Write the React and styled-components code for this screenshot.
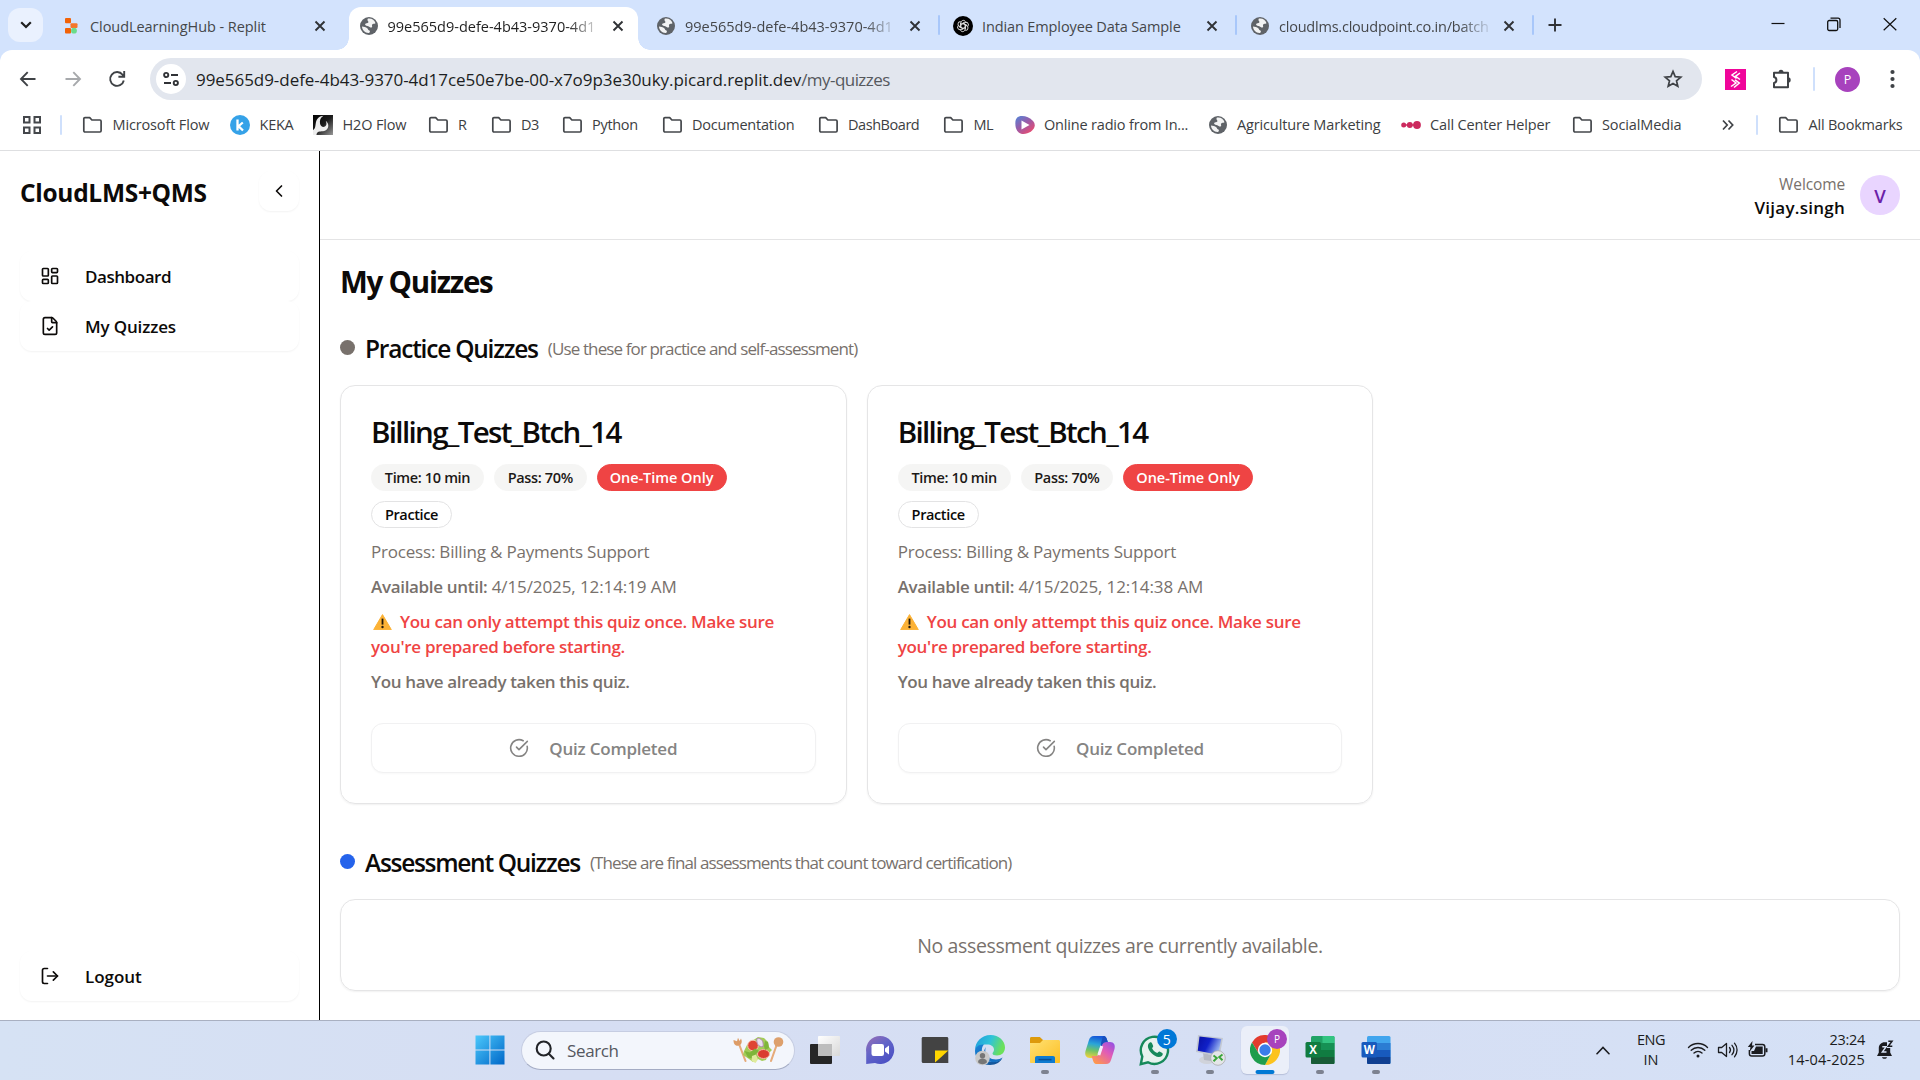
import React from "react";
import styled, { createGlobalStyle, css } from "styled-components";
import { LayoutDashboard, FileCheck, LogOut, ChevronLeft, CircleCheckBig } from "lucide-react";

const Global = createGlobalStyle`
  * { box-sizing: border-box; }
  body {
    margin: 0;
    background: #fff;
    color: #0c0a09;
    font-family: "Open Sans", "Noto Sans", sans-serif;
    overflow: hidden;
  }
  h1, h2, h3, p { margin: 0; }
  svg { display: block; flex: none; }
`;

const Screen = styled.div`
  width: 1920px;
  height: 1080px;
  display: flex;
  flex-direction: column;
`;

const Text = styled.span`
  white-space: nowrap;
  letter-spacing: ${(p) => p.$ls || 0}px;
`;

/* ---------- Browser chrome ---------- */

const TabStrip = styled.header`
  height: 50px;
  flex: none;
  display: flex;
  align-items: flex-start;
  padding-left: 8px;
  background: #d3e3fd;
`;

const TabSearch = styled.button`
  width: 35px;
  height: 34px;
  margin: 8px 8px 0 0;
  padding: 0;
  border: 0;
  border-radius: 12px;
  background: #eaf1fe;
  display: grid;
  place-items: center;
`;

const TabBox = styled.div`
  position: relative;
  width: 289px;
  height: 43px;
  margin: 7px ${(p) => (p.$divider ? 3 : 8.5)}px 0 0;
  padding: 0 8px 5px 10px;
  display: flex;
  align-items: center;
  gap: 9px;
  font-size: 14.5px;
  color: #45474a;
  border-radius: 12px 12px 0 0;
  ${(p) =>
    p.$active &&
    css`
      background: #fff;
      color: #1f1f1f;
      &::before,
      &::after {
        content: "";
        position: absolute;
        bottom: 0;
        width: 12px;
        height: 12px;
      }
      &::before {
        left: -12px;
        background: radial-gradient(circle at 0 0, #d3e3fd 11.5px, #fff 12px);
      }
      &::after {
        right: -12px;
        background: radial-gradient(circle at 100% 0, #d3e3fd 11.5px, #fff 12px);
      }
    `}
`;

const TabTitle = styled.div`
  width: 210px;
  white-space: nowrap;
  letter-spacing: ${(p) => p.$ls}px;
  ${(p) => p.$fade && css`mask-image: linear-gradient(90deg, #000 86%, rgba(0, 0, 0, 0.15) 100%);`}
`;

const TabClose = styled.span`
  display: grid;
  place-items: center;
  width: 24px;
  margin-left: auto;
  color: #303236;
`;

const TabDivider = styled.span`
  width: 2px;
  height: 20px;
  margin: 15px 3px 0 0;
  border-radius: 1px;
  background: #a8c7fa;
`;

const NewTab = styled.div`
  margin: 17px 0 0 10px;
`;

const WindowControls = styled.div`
  margin: 16px 23px 0 auto;
  display: flex;
  align-items: center;
  gap: 42px;
`;

const ToolbarBack = styled.div`
  background: #d3e3fd;
`;

const Toolbar = styled.div`
  height: 58px;
  display: flex;
  align-items: center;
  padding: 0 18px;
  background: #fff;
  border-radius: 12px 12px 0 0;
`;

const NavButtons = styled.div`
  display: flex;
  gap: 24.5px;
  width: 132px;
`;

const AddressBar = styled.div`
  width: 1552px;
  height: 42px;
  display: flex;
  align-items: center;
  padding: 0 19px 0 6px;
  border-radius: 21px;
  background: #e2e6ee;
  font-size: 17px;
  color: #1c1e22;
`;

const SiteInfo = styled.span`
  width: 30px;
  height: 30px;
  margin-right: 10px;
  border-radius: 50%;
  background: #fff;
  display: grid;
  place-items: center;
`;

const UrlPath = styled(Text)`
  color: #55585d;
  flex: 1;
`;

const Extensions = styled.div`
  display: flex;
  align-items: center;
  margin-left: 23px;
`;

const PinkExtension = styled.span`
  width: 21px;
  height: 21px;
  margin-right: 25px;
  background: #f0059a;
  display: grid;
  place-items: center;
`;

const Rule = styled.span`
  flex: none;
  width: 2px;
  height: ${(p) => p.$h || 20}px;
  margin: 0 ${(p) => p.$r || 0}px 0 ${(p) => p.$l || 0}px;
  border-radius: 1px;
  background: #cfe0fc;
`;

const ProfileDot = styled.span`
  width: ${(p) => p.$size}px;
  height: ${(p) => p.$size}px;
  border-radius: 50%;
  background: #a742bd;
  color: #fff;
  font-size: ${(p) => p.$size * 0.5}px;
  display: grid;
  place-items: center;
`;

const MenuDots = styled.span`
  margin-left: 29px;
`;

const Bookmarks = styled.nav`
  height: 43px;
  flex: none;
  display: flex;
  align-items: center;
  padding: 0 16px 9px 22px;
  border-bottom: 1px solid #dedfe1;
  font-size: 14.5px;
  color: #3c3e42;
`;

const Bookmark = styled.span`
  display: flex;
  align-items: center;
  gap: 9.5px;
  width: ${(p) => p.$w}px;
  flex: none;
  white-space: nowrap;
`;

/* ---------- Application ---------- */

const Shell = styled.div`
  flex: 1;
  min-height: 0;
  display: flex;
`;

const Sidebar = styled.aside`
  width: 320px;
  flex: none;
  display: flex;
  flex-direction: column;
  padding: 20px 20px 19px;
  border-right: 1px solid #000;
`;

const Brand = styled.div`
  height: 40px;
  display: flex;
  align-items: center;
  justify-content: space-between;
  font-size: 24.5px;
  font-weight: 700;
  line-height: 34px;
  margin-bottom: 40px;
`;

const BrandName = styled(Text)`
  padding-top: 3px;
`;

const SoftButton = styled.button`
  border: 0;
  background: #fff;
  color: #0c0a09;
  font: inherit;
  border-radius: 12px;
  box-shadow: 0 1px 2px rgba(0, 0, 0, 0.05);
  padding: 0;
`;

const Collapse = styled(SoftButton)`
  width: 40px;
  height: 40px;
  display: grid;
  place-items: center;
`;

const NavItem = styled(SoftButton)`
  height: 50px;
  flex: none;
  display: flex;
  align-items: center;
  gap: 25px;
  padding: 1px 0 0 20px;
  font-size: 17px;
  font-weight: 600;
  margin-top: ${(p) => (p.$bottom ? "auto" : 0)};
  svg { margin-bottom: 2px; }
`;

const Main = styled.div`
  flex: 1;
  display: flex;
  flex-direction: column;
`;

const TopBar = styled.div`
  height: 89px;
  flex: none;
  display: flex;
  align-items: center;
  justify-content: flex-end;
  gap: 15px;
  padding-right: 20px;
  border-bottom: 1px solid #e4e4e5;
`;

const UserInfo = styled.div`
  display: flex;
  flex-direction: column;
  align-items: flex-end;
  line-height: 24px;
  padding-top: 2px;
`;

const Welcome = styled(Text)`
  font-size: 15.5px;
  color: #78716c;
`;

const UserName = styled(Text)`
  font-size: 17px;
  font-weight: 600;
`;

const Avatar = styled.div`
  width: 40px;
  height: 40px;
  border-radius: 50%;
  background: #e9d5ff;
  color: #6b21a8;
  font-size: 18.5px;
  font-weight: 600;
  padding-top: 1px;
  display: grid;
  place-items: center;
`;

const Content = styled.main`
  padding: 22px 20px 20px;
  display: flex;
  flex-direction: column;
`;

const PageTitle = styled.h1`
  font-size: 29.5px;
  font-weight: 700;
  line-height: 40px;
  letter-spacing: -1.25px;
  margin-bottom: 29px;
`;

const SectionTitle = styled.h2`
  display: flex;
  align-items: center;
  gap: 10px;
  height: 35px;
  font-size: 24.5px;
  font-weight: 600;
  margin-bottom: 19px;
`;

const Dot = styled.span`
  width: 15px;
  height: 15px;
  margin-bottom: 2px;
  border-radius: 50%;
  background: ${(p) => p.$color};
`;

const SectionNote = styled(Text)`
  font-size: 17px;
  font-weight: 400;
  color: #78716c;
`;

const Grid = styled.div`
  display: grid;
  grid-template-columns: repeat(3, 1fr);
  gap: 20px;
  margin-bottom: 41px;
`;

const Card = styled.article`
  height: 419px;
  border: 1px solid #e5e5e6;
  border-radius: 15px;
  box-shadow: 0 1px 2px rgba(0, 0, 0, 0.06);
  padding: 29px 30px 30px;
  display: flex;
  flex-direction: column;
`;

const CardTitle = styled.h3`
  font-size: 29.5px;
  font-weight: 600;
  line-height: 34px;
  letter-spacing: -1.66px;
  margin-bottom: 15px;
`;

const Badges = styled.div`
  display: flex;
  flex-wrap: wrap;
  gap: 10px;
  width: 380px;
  margin-bottom: 11px;
`;

const tones = {
  grey: css`background: #f5f5f4; border-color: #f5f5f4; color: #1c1917;`,
  red: css`background: #ef4444; border-color: #ef4444; color: #fff;`,
  outline: css`background: #fff; border-color: #e3e3e4; color: #0c0a09;`,
};

const Badge = styled.span`
  width: ${(p) => p.$w}px;
  height: 27px;
  border: 1px solid;
  border-radius: 14px;
  display: flex;
  align-items: center;
  justify-content: center;
  font-size: 14.5px;
  font-weight: 600;
  ${(p) => tones[p.$tone]}
`;

const Line = styled.p`
  font-size: 17px;
  line-height: 25px;
  margin-bottom: 10px;
  white-space: nowrap;
  color: ${(p) => (p.$warn ? "#ef4444" : "#78716c")};
  font-weight: ${(p) => (p.$strong ? 600 : 400)};
  letter-spacing: ${(p) => p.$ls || 0}px;
  b { font-weight: 600; letter-spacing: -0.32px; }
  svg { display: inline-block; vertical-align: -2px; margin: 0 8px 0 2px; }
`;

const Completed = styled.button`
  height: 50px;
  margin-top: auto;
  border: 1px solid #f1f1f2;
  border-radius: 12px;
  background: #fff;
  box-shadow: 0 1px 2px rgba(0, 0, 0, 0.03);
  display: flex;
  align-items: center;
  justify-content: center;
  gap: 20px;
  font: 600 17px "Open Sans", sans-serif;
  letter-spacing: -0.22px;
  color: #858483;
`;

const EmptyCard = styled.div`
  height: 92px;
  border: 1px solid #e5e5e6;
  border-radius: 15px;
  box-shadow: 0 1px 2px rgba(0, 0, 0, 0.06);
  display: grid;
  place-items: center;
  font-size: 19.5px;
  letter-spacing: -0.37px;
  color: #78716c;
`;

/* ---------- Taskbar ---------- */

const Taskbar = styled.footer`
  height: 60px;
  flex: none;
  display: flex;
  align-items: center;
  padding: 0 26px 1px 462px;
  border-top: 1px solid #a9b0c1;
  background: linear-gradient(90deg, #d6e2f4, #d6def3 30%, #d6dff4 70%, #d5e1f6);
`;

const Slot = styled.div`
  position: relative;
  width: 55.1px;
  height: 58px;
  flex: none;
  display: grid;
  place-items: center;
`;

const ActivePlate = styled.div`
  width: 48px;
  height: 48px;
  border-radius: 6px;
  background: #ebeff9;
  box-shadow: 0 1px 1px rgba(90, 100, 140, 0.25);
  display: grid;
  place-items: center;
`;

const Indicator = styled.span`
  position: absolute;
  left: 50%;
  bottom: 5px;
  transform: translateX(-50%);
  width: ${(p) => (p.$active ? 19 : 8)}px;
  height: 4px;
  border-radius: 2px;
  background: ${(p) => (p.$active ? "#0078d4" : "#7d8290")};
`;

const Notify = styled.span`
  position: absolute;
  top: 8px;
  right: 6px;
`;

const Count = styled.span`
  width: 20px;
  height: 20px;
  border-radius: 50%;
  background: #0078d7;
  color: #fff;
  font-size: 14px;
  display: grid;
  place-items: center;
`;

const SearchPill = styled.div`
  width: 274px;
  height: 39px;
  margin: 0 2px 0 4px;
  padding: 0 10px 0 13px;
  border: 1px solid #c6cde2;
  border-bottom-color: #a4acc4;
  border-radius: 20px;
  background: #f3f6fc;
  display: flex;
  align-items: center;
  gap: 12px;
  font-size: 17px;
  color: #55585f;
  svg:last-child { margin-left: auto; }
`;

const Tray = styled.div`
  margin-left: auto;
  display: flex;
  align-items: center;
  font-size: 14.5px;
  line-height: 20px;
  color: #1b1c20;
`;

const TrayStatus = styled.div`
  display: flex;
  align-items: center;
  gap: 8px;
`;

const TrayText = styled.div`
  display: flex;
  flex-direction: column;
  align-items: ${(p) => p.$align};
  margin: 0 ${(p) => p.$r}px 1px ${(p) => p.$l}px;
`;

/* ---------- Icons ---------- */

const Globe = () => (
  <svg width="20" height="20" viewBox="0 0 20 20">
    <circle cx="10" cy="10" r="9" fill="#5f6368" />
    <path d="M9 2.6c3.6-.6 6.600 1.600 7.500 4.600-1.200.8-2.600.3-3.300 1.300-.8 1.100.6 1.800-.3 2.700-1 .9-2.400-.3-3.500-1-1.300-.7-3-.4-3.300-1.500-.3-1 1.300-1.500 2.500-1.700 1.300-.2.9-1.200.3-1.900-.5-.6-.6-1.800.1-2.500zM3 10.500c1.800.2 4 .6 5.300 1.700 1 .9.600 1.800 1.600 2.100.9.300 1.200.9.900 1.700-.2.600-.9 1-1.400 1C6 17 3.100 14 3 10.500z" fill="#fff" opacity=".92" />
  </svg>
);
const ReplitIcon = () => (
  <svg width="20" height="20" viewBox="0 0 20 20">
    <rect x="4" y="2" width="6" height="5.300" rx="1" fill="#f26207" />
    <rect x="9.500" y="7.300" width="7" height="4.700" rx="1" fill="#f5762a" />
    <rect x="4" y="12" width="6" height="5.500" rx="1" fill="#f26207" />
    <circle cx="13" cy="14.700" r="2.900" fill="#6bdc8b" />
  </svg>
);
const OpenAIIcon = () => (
  <svg width="20" height="20" viewBox="0 0 20 20">
    <circle cx="10" cy="10" r="10" fill="#000" />
    <g fill="none" stroke="#e8e8e8" strokeWidth="0.9">
      {[0, 60, 120, 180, 240, 300].map((a) => (
        <path key={a} transform={`rotate(${a} 10 10)`} d="M8 10.800V6.700c0-2.700 3.900-3.200 4.500-.8M8 8.200l3.500-2" />
      ))}
    </g>
  </svg>
);
const Close = () => (
  <svg width="12" height="12" viewBox="0 0 12 12" stroke="currentColor" strokeWidth="1.900">
    <path d="M1.500 1.500l9 9M10.500 1.500l-9 9" />
  </svg>
);
const Folder = () => (
  <svg width="21" height="20" viewBox="0 0 21 20" fill="none" stroke="#44474b" strokeWidth="1.700" strokeLinejoin="round">
    <path d="M1.800 3.800c0-.7.500-1.200 1.200-1.200h4.700l2.200 2.400h8c.7 0 1.200.5 1.200 1.200v9.600c0 .7-.5 1.200-1.200 1.200H3c-.7 0-1.200-.5-1.200-1.200z" />
  </svg>
);
const Keka = () => (
  <svg width="20" height="20" viewBox="0 0 20 20">
    <circle cx="10" cy="10" r="10" fill="#35a2e8" />
    <path d="M7.500 4.500v11M12.800 7.500L8.500 11.200l4.500 4.300" fill="none" stroke="#fff" strokeWidth="2.300" />
  </svg>
);
const H2O = () => (
  <svg width="20" height="20" viewBox="0 0 20 20">
    <defs>
      <linearGradient id="h2o" x1="0" y1="0" x2="1" y2="1">
        <stop offset="0" stopColor="#000" /><stop offset=".5" stopColor="#1c1c1c" /><stop offset="1" stopColor="#999" />
      </linearGradient>
    </defs>
    <rect width="20" height="20" fill="url(#h2o)" />
    <path d="M0 15c2.500-1 2.300-4.500 3-8C3.800 3.300 7 1 10.500.8 7.500 2.500 6.500 5.500 7 8.500c.5 3 3 4 5 3 1.800-1 1.800-3.500.8-5.500 3 2 3.400 6.500.7 8.800-2.800 2.300-7 1.200-8.500 2.200-1.200.8-1.500 2-1.500 3H0z" fill="#fff" opacity=".92" />
  </svg>
);
const Radio = () => (
  <svg width="20" height="20" viewBox="0 0 20 20">
    <defs>
      <linearGradient id="radio" x1="0" y1="0" x2=".8" y2="1">
        <stop offset="0" stopColor="#4f86d9" /><stop offset=".5" stopColor="#9a5ba8" /><stop offset="1" stopColor="#f04a6b" />
      </linearGradient>
    </defs>
    <path d="M4 1.500C8 .2 14 1.500 18 6c3 3.500 2 7.500-2 10.500-4 2.800-9 3.300-12 1.200C.5 15 0 10 .5 6 .8 3.800 2 2.200 4 1.500z" fill="url(#radio)" />
    <path d="M6.500 5.500l8 4.500-8 4.500z" fill="#fff" />
  </svg>
);
const CallCenter = () => (
  <svg width="20" height="20" viewBox="0 0 20 20" fill="#cc2a5e">
    <circle cx="2.700" cy="10" r="2.500" /><circle cx="8.800" cy="10" r="3" /><circle cx="16" cy="10" r="3.900" /><path d="M2 9.300h14v1.400H2z" />
  </svg>
);
const AppsGrid = () => (
  <svg width="20" height="20" viewBox="0 0 20 20" fill="none" stroke="#44474b" strokeWidth="2">
    <path d="M2 2h5.500v5.500H2zM12.500 2H18v5.500h-5.500zM2 12.500h5.500V18H2zM12.500 12.500H18V18h-5.500z" />
  </svg>
);
const Arrow = ({ flip, color }) => (
  <svg width="20" height="20" viewBox="0 0 20 20" fill="none" stroke={color} strokeWidth="1.900" transform={flip ? "scale(-1 1)" : undefined}>
    <path d="M17.500 10H3.200M9.700 3.200L3 10l6.700 6.800" />
  </svg>
);
const Reload = () => (
  <svg width="20" height="20" viewBox="0 0 20 20" fill="none" stroke="#3f4246" strokeWidth="1.900">
    <path d="M16.800 11.500A6.900 6.900 0 1 1 15.600 5.800L17 7.500M17.200 2v5.800h-5.800" />
  </svg>
);
const Tune = () => (
  <svg width="18" height="18" viewBox="0 0 18 18" fill="none" stroke="#303236" strokeWidth="1.900">
    <circle cx="4.200" cy="5" r="2.100" /><path d="M9 5h7M2 13h7" /><circle cx="13.800" cy="13" r="2.100" />
  </svg>
);
const Star = () => (
  <svg width="20" height="20" viewBox="0 0 20 20" fill="none" stroke="#3f4246" strokeWidth="1.700" strokeLinejoin="miter">
    <path d="M10 2.400l2.200 5.200 5.600.5-4.300 3.700 1.300 5.500-4.800-2.900-4.800 2.900 1.300-5.500L2.200 8.100l5.600-.5z" />
  </svg>
);
const Puzzle = () => (
  <svg width="22" height="22" viewBox="0 0 22 22">
    <path d="M3 4.700h14v14.500H3v-4.200c3.200-.6 3.200-5.400 0-6z" fill="none" stroke="#3f4246" strokeWidth="2" strokeLinejoin="round" />
    <path d="M7.500 4.500a2.500 2.700 0 0 1 5 0zM17 9.300a2.700 2.600 0 0 1 0 5.200z" fill="#3f4246" />
  </svg>
);
const Warning = () => (
  <svg width="19" height="16" viewBox="0 0 19 16">
    <path d="M9.500 0.600L18.300 15.600H.7z" fill="#fcb236" stroke="#fcb236" strokeLinejoin="round" />
    <path d="M9.500 4.600v6" stroke="#22180a" strokeWidth="1.800" /><circle cx="9.500" cy="13" r="1.200" fill="#22180a" />
  </svg>
);

const WindowsLogo = () => (
  <svg width="30" height="30" viewBox="0 0 30 30">
    <defs>
      <linearGradient id="win" x1="0" y1="0" x2="1" y2="1"><stop offset="0" stopColor="#4cc8fb" /><stop offset="1" stopColor="#0067c8" /></linearGradient>
    </defs>
    <path d="M.5.500h13.900v13.900H.5zM15.400.500h14.100v13.900H15.400zM.5 15.400h13.900v14.100H.5zM15.400 15.400h14.100v14.100H15.400z" fill="url(#win)" />
  </svg>
);
const SearchGlass = () => (
  <svg width="20" height="20" viewBox="0 0 20 20" fill="none" stroke="#222428" strokeWidth="2.100" strokeLinecap="round">
    <circle cx="8.700" cy="8.500" r="7" /><path d="M13.800 13.800L18.500 18.500" />
  </svg>
);
const Salad = () => (
  <svg width="52" height="30" viewBox="0 0 52 30">
    <g stroke="#e6ab7a" strokeWidth="2.100" strokeLinecap="round" fill="none">
      <path d="M7 9l6.500 17M45 9l-6 17" />
    </g>
    <path d="M1.500 5c0 5 3 6.500 5.500 5.600 2.700-.8 3.500-4 2-7L7.600 6 6 2.800 5 6.300z" fill="#dd9c66" />
    <circle cx="46.500" cy="7" r="4.800" fill="#dda06c" />
    <path d="M12 16l3-6 5-4 6-4 6 1 4 4 1 5 3 3-4 4-2 6-4 1-4-2-5 3-4-3-6-4z" fill="#a4cc58" />
    <circle cx="21" cy="10.500" r="5.300" fill="#df4433" stroke="#f7c4ae" strokeWidth="1" />
    <ellipse cx="31.500" cy="19" rx="6" ry="4.500" fill="#da3d30" stroke="#f6b8a4" strokeWidth="1" />
    <path d="M25 3.500c4-1 7 3 6 8-4 1-7-3-6-8z" fill="#eadfee" stroke="#a97bb0" strokeWidth=".8" />
    <path d="M12.500 16l5.500 1.500 5-4 4 2.500-3 3 1 4-3 1-6-1.500zM33 6l3 1 1 6-4 2-1-4z" fill="#7fb53a" />
    <path d="M20 21l4-1.500 2 5-2.500 3.500-4-2z" fill="#dfeb9c" />
  </svg>
);
const TaskView = () => (
  <svg width="32" height="30" viewBox="0 0 32 30">
    <defs><linearGradient id="tv" x1="0" y1="0" x2="1" y2="1"><stop offset="0" stopColor="#fff" /><stop offset="1" stopColor="#d8d8d8" /></linearGradient></defs>
    <rect x="1" y="9" width="22" height="20" rx="1" fill="#262626" />
    <rect x="9" y="1" width="22" height="20" rx="1" fill="url(#tv)" />
    <rect x="9" y="9" width="14" height="12" fill="#bdbdbd" />
  </svg>
);
const TeamsChat = () => (
  <svg width="30" height="30" viewBox="0 0 30 30">
    <defs><linearGradient id="chat" x1="0" y1="0" x2=".7" y2="1"><stop offset="0" stopColor="#9a6fb5" /><stop offset=".5" stopColor="#6264c8" /><stop offset="1" stopColor="#4b50c4" /></linearGradient></defs>
    <path d="M15 1a14 14 0 1 1-5 27L1.200 29V17A14 14 0 0 1 15 1z" fill="url(#chat)" />
    <rect x="6.500" y="9" width="12.500" height="12" rx="2.200" fill="#fff" /><path d="M20 13.500l4-3v9l-4-3z" fill="#fff" />
  </svg>
);
const StickyNotes = () => (
  <svg width="28" height="28" viewBox="0 0 28 28">
    <path d="M2.200 1h23.600c.9 0 1.500.6 1.500 1.500V27H2.200C1.300 27 .7 26.400.7 25.500v-23C.7 1.600 1.300 1 2.200 1z" fill="#434343" />
    <path d="M14 14.500h13.300l-7 6.500L14 26.500z" fill="#ffd500" />
  </svg>
);
const Edge = () => (
  <svg width="32" height="32" viewBox="0 0 32 32">
    <defs>
      <linearGradient id="edge1" x1="0" y1="0" x2="1" y2=".3"><stop offset="0" stopColor="#1f9ade" /><stop offset=".55" stopColor="#2fc3d8" /><stop offset="1" stopColor="#6be05a" /></linearGradient>
      <linearGradient id="edge2" x1="0" y1="0" x2="1" y2="1"><stop offset="0" stopColor="#1a86dc" /><stop offset="1" stopColor="#114a8b" /></linearGradient>
    </defs>
    <path d="M1 16C1 8 7.500 1 16.500 1 25 1 31 7 31 13.500c0 5-3.500 8-8 8-3 0-4.500-1-4.500-2 0-1 1.500-1.500 1.500-4 0-3-3-5-7-5C6 10.500 2 13 1 16z" fill="url(#edge1)" />
    <path d="M1 17c0-4 4-7 9-6.500-2 2-2.500 4.500-2 8C9 24 14 28.500 20 28c4-.3 7-2.500 8.500-4.500C27 28 22 31 16 31 7.500 31 1 25 1 17z" fill="url(#edge2)" />
    <path d="M12 13c-2 4 0 10 6 12 4 1 8 .5 10.500-1.500-4 6-12 6-16 2-3-3-3.500-9-.5-12.500z" fill="#1470c2" />
    <circle cx="8.500" cy="24" r="7.300" fill="#c9c9c9" /><circle cx="8.500" cy="21.800" r="2.700" fill="#767676" /><path d="M4 28.300c0-5 9-5 9 0-2 2.500-7 2.500-9 0z" fill="#767676" />
  </svg>
);
const Explorer = () => (
  <svg width="32" height="28" viewBox="0 0 32 28">
    <defs><linearGradient id="exp" x1="0" y1="0" x2="1" y2="1"><stop offset="0" stopColor="#ffe173" /><stop offset="1" stopColor="#fdbf24" /></linearGradient></defs>
    <path d="M1 2.500C1 1.500 1.500 1 2.500 1h8.300L14 4v5H1z" fill="#dd9a0b" />
    <path d="M1 7h10l3-3h15.500c1 0 1.500.5 1.500 1.500V26c0 .600-.4 1-1 1H2c-.6 0-1-.4-1-1z" fill="url(#exp)" />
    <path d="M6 27v-5c0-1.200.8-2 2-2h16c1.200 0 2 .8 2 2v5z" fill="#0f7bd0" /><path d="M9.500 23.600h13" stroke="#0a4f93" strokeWidth="1.500" />
  </svg>
);
const Copilot = () => (
  <svg width="32" height="30" viewBox="0 0 32 30">
    <defs>
      <linearGradient id="cp1" x1="0.400" y1="0" x2=".2" y2="1"><stop offset="0" stopColor="#1658d8" /><stop offset=".35" stopColor="#2aa5d8" /><stop offset=".65" stopColor="#6fc367" /><stop offset="1" stopColor="#f5d13a" /></linearGradient>
      <linearGradient id="cp2" x1="1" y1="0" x2=".2" y2="1"><stop offset="0" stopColor="#8a50e8" /><stop offset=".45" stopColor="#e05bb8" /><stop offset="1" stopColor="#ff9a4a" /></linearGradient>
    </defs>
    <path d="M10 1h9c3 0 3.500 2 4.300 4.500L24.500 9H20c-2.500 0-3.300 1.500-4 4l-2 6.500c-.8 2.500-2 3.500-4 3.500H6c-4 0-5.500-3-4.500-7L4.800 5.500C5.800 2.500 7 1 10 1z" fill="url(#cp1)" />
    <path d="M22 29h-9c-3 0-3.500-2-4.300-4.500L7.500 21H12c2.500 0 3.300-1.500 4-4l2-6.500C18.800 8 20 7 22 7h4c4 0 5.500 3 4.500 7l-3.300 10.500C26.200 27.500 25 29 22 29z" fill="url(#cp2)" />
    <path d="M19 1c3 0 3.500 2 4.300 4.500l.6 1.700C20.500 6.800 19 8 18 10.500L16.500 15 17 8z" fill="#174fbd" />
    <path d="M17.800 11l-3 9" stroke="#f3eefc" strokeWidth="3" />
  </svg>
);
const WhatsApp = () => (
  <svg width="32" height="32" viewBox="0 0 32 32">
    <path d="M3.300 22.500A13.600 13.600 0 1 1 9 28.300L1.800 30.200z" fill="#e6f2ee" stroke="#16895a" strokeWidth="2.400" />
    <path d="M10.500 8.800c1-.8 2-.6 2.500.4l1.200 2.700c.2.800-.9 1.700-1.100 2.300 1.100 2.400 3 4 5.200 4.900.9-.6 1.400-1.800 2.300-1.500l2.700 1.400c.9.700.4 2.200-.5 3-3 2.400-7.500.2-10.500-3-2.800-3-5-7.800-1.800-10.200z" fill="#16895a" />
  </svg>
);
const Remote = () => (
  <svg width="32" height="32" viewBox="0 0 32 32">
    <defs><linearGradient id="rd" x1="0" y1=".2" x2="1" y2=".6"><stop offset="0" stopColor="#0a12a8" /><stop offset=".45" stopColor="#1020c8" /><stop offset="1" stopColor="#a9c6f5" /></linearGradient></defs>
    <ellipse cx="13" cy="26" rx="8" ry="4" fill="#d0d3da" /><path d="M9 19l9 2-1 6-7-1z" fill="#b6bac4" />
    <path d="M4 1l25 3-3.500 18.500L2 18z" fill="#c3c8d2" /><path d="M5.500 2.500L27.300 5l-3 15.700L3.700 16.800z" fill="url(#rd)" />
    <circle cx="24" cy="24" r="7.300" fill="#e4e6e8" stroke="#a9abad" strokeWidth=".8" />
    <path d="M19.500 21.500l3.300 2.500-3.300 3.200M28.500 20.500l-3.300 2.500 3.300 3.200" fill="none" stroke="#3aa53a" strokeWidth="1.900" />
  </svg>
);
const Chrome = () => (
  <svg width="30" height="30" viewBox="0 0 30 30">
    <path d="M2 7.500A15 15 0 0 1 28 7.500H15L8.800 18.600z" fill="#e33b2e" />
    <path d="M28 7.500A15 15 0 0 1 15 30l6.200-11.400L15 7.500z" fill="#fcc31e" />
    <path d="M15 30A15 15 0 0 1 2 7.500l6.800 11.100h12.400z" fill="#1f9d4d" />
    <circle cx="15" cy="15" r="7.200" fill="#fff" /><circle cx="15" cy="15" r="5.700" fill="#3b7de9" />
  </svg>
);
const Office = ({ colors, plate, mark }) => (
  <svg width="30" height="30" viewBox="0 0 30 30">
    <rect x="6" y="1" width="23.500" height="28" rx="1.500" fill={colors[0]} />
    {mark === "X" && <path d="M17.500 1H28c1 0 1.500.5 1.500 1.500V8h-12z" fill={colors[1]} />}
    <path d="M6 8h23.500v7H6z" fill={colors[2]} /><path d="M6 15h23.500v7H6z" fill={colors[3]} />
    <path d="M6 22h23.500v5.500c0 1-.5 1.500-1.500 1.500H7.500C6.500 29 6 28.500 6 27.500z" fill={colors[4]} />
    <rect x=".5" y="7" width="15.500" height="15.500" rx="1.500" fill={plate} />
    <text x="8.200" y="18.600" textAnchor="middle" fontFamily="Open Sans, sans-serif" fontWeight="700" fontSize="11.500" fill="#fff">{mark}</text>
  </svg>
);
const Wifi = () => (
  <svg width="22" height="18" viewBox="0 0 22 18" fill="none" stroke="#1b1c20" strokeWidth="1.400" strokeLinecap="round">
    <path d="M1.500 6.500c5.300-5.300 13.700-5.300 19 0M4.200 9.300c3.800-3.800 9.800-3.800 13.600 0M7 12.100c2.300-2.200 5.700-2.200 8 0" /><circle cx="11" cy="15" r="1.500" fill="#1b1c20" stroke="none" />
  </svg>
);
const Volume = () => (
  <svg width="22" height="18" viewBox="0 0 22 18" fill="none" stroke="#1b1c20" strokeWidth="1.300" strokeLinecap="round" strokeLinejoin="round">
    <path d="M1.500 6.500h3.200L9.500 2.500v13L4.700 11.500H1.500zM12.500 6.500c1.200 1.500 1.200 3.500 0 5M15 4.300c2.300 2.800 2.300 6.600 0 9.400M17.500 2.200c3.400 4 3.400 9.600 0 13.600" />
  </svg>
);
const Battery = () => (
  <svg width="21" height="18" viewBox="0 0 21 18">
    <path d="M8 3.500h7.500c1.400 0 2.300.9 2.300 2.300v7c0 1.400-.9 2.300-2.300 2.300H4.700c-1.400 0-2.300-.9-2.300-2.300V9" fill="none" stroke="#1b1c20" strokeWidth="1.500" />
    <path d="M9 5.500h6.700v7.500H4.500v-3L7 10zM18.500 7.300h2v4h-2zM5.500 0L.8 6h2.700L2.700 10.500 7.500 4.500H5z" fill="#1b1c20" />
  </svg>
);
const Bell = () => (
  <svg width="18" height="20" viewBox="0 0 18 20">
    <path d="M1 16l1.800-3.500V8C2.800 4.500 5.500 2 9 2.200h2V8h3.200v4.500L16 16z" fill="#1b1c20" /><path d="M6 17.200h5c-.5 2-4.500 2-5 0z" fill="#1b1c20" />
    <path d="M6.300 6.700h3.900l-3.900 5.300h4.200" fill="none" stroke="#dbe5f7" strokeWidth="1.400" />
    <path d="M12.300 1.300h3.700l-3.700 5h4" fill="none" stroke="#1b1c20" strokeWidth="1.500" />
  </svg>
);

/* ---------- Data ---------- */

const uuidTitle = "99e565d9-defe-4b43-9370-4d1";
const tabs = [
  { icon: ReplitIcon, title: "CloudLearningHub - Replit", ls: -0.06 },
  { icon: Globe, title: uuidTitle, ls: 0, fade: true, active: true },
  { icon: Globe, title: uuidTitle, ls: 0, fade: true, divider: true },
  { icon: OpenAIIcon, title: "Indian Employee Data Sample", ls: -0.12, divider: true },
  { icon: Globe, title: "cloudlms.cloudpoint.co.in/batch", ls: -0.22, fade: true, divider: true },
];

const bookmarks = [
  [Folder, "Microsoft Flow", 148, -0.14],
  [Keka, "KEKA", 83, -0.25],
  [H2O, "H2O Flow", 114.5, -0.15],
  [Folder, "R", 63, 0],
  [Folder, "D3", 71, -0.4],
  [Folder, "Python", 100, -0.3],
  [Folder, "Documentation", 156, -0.22],
  [Folder, "DashBoard", 125.5, -0.45],
  [Folder, "ML", 71.5, -0.5],
  [Radio, "Online radio from In...", 193, -0.18],
  [Globe, "Agriculture Marketing", 193, -0.14],
  [CallCenter, "Call Center Helper", 171, -0.14],
  [Folder, "SocialMedia", 150.5, -0.13],
];

const quizzes = [
  { until: "4/15/2025, 12:14:19 AM" },
  { until: "4/15/2025, 12:14:38 AM" },
];

function QuizCard({ until }) {
  return (
    <Card>
      <CardTitle>Billing_Test_Btch_14</CardTitle>
      <Badges>
        <Badge $tone="grey" $w={113}><Text $ls={-0.36}>Time: 10 min</Text></Badge>
        <Badge $tone="grey" $w={92.5}><Text $ls={-0.34}>Pass: 70%</Text></Badge>
        <Badge $tone="red" $w={130}><Text $ls={-0.04}>One-Time Only</Text></Badge>
        <Badge $tone="outline" $w={81}><Text $ls={-0.38}>Practice</Text></Badge>
      </Badges>
      <Line $ls={-0.2}>Process: Billing &amp; Payments Support</Line>
      <Line $ls={-0.1}><b>Available until:</b> {until}</Line>
      <Line $warn $strong $ls={-0.29}>
        <Warning />You can only attempt this quiz once. Make sure<br />you're prepared before starting.
      </Line>
      <Line $strong $ls={-0.36}>You have already taken this quiz.</Line>
      <Completed><CircleCheckBig size={20} strokeWidth={1.9} />Quiz Completed</Completed>
    </Card>
  );
}

export default function App() {
  return (
    <Screen>
      <Global />
      <TabStrip>
        <TabSearch>
          <svg width="12" height="8" viewBox="0 0 12 8" fill="none" stroke="#1f1f1f" strokeWidth="2.200"><path d="M1.200 1.200L6 6l4.800-4.800" /></svg>
        </TabSearch>
        {tabs.map(({ icon: Icon, title, ls, fade, active, divider }, i) => (
          <React.Fragment key={i}>
            <TabBox $active={active} $divider={divider}>
              <Icon />
              <TabTitle $ls={ls} $fade={fade}>{title}</TabTitle>
              <TabClose><Close /></TabClose>
            </TabBox>
            {divider && <TabDivider />}
          </React.Fragment>
        ))}
        <NewTab>
          <svg width="16" height="16" viewBox="0 0 16 16" stroke="#303236" strokeWidth="1.900"><path d="M8 1.500v13M1.500 8h13" /></svg>
        </NewTab>
        <WindowControls>
          <svg width="14" height="16" viewBox="0 0 14 16" stroke="#111" strokeWidth="1.200"><path d="M.5 7.500h13" /></svg>
          <svg width="14" height="16" viewBox="0 0 14 16" fill="none" stroke="#111" strokeWidth="1.300"><rect x=".7" y="4.500" width="10" height="10" rx="1.500" /><path d="M3.500 2.200h7.500c1.300 0 2 .8 2 2V12" /></svg>
          <svg width="14" height="16" viewBox="0 0 14 16" stroke="#111" strokeWidth="1.200"><path d="M.7 2.200l12.600 12M13.300 2.200L.7 14.200" /></svg>
        </WindowControls>
      </TabStrip>

      <ToolbarBack>
        <Toolbar>
          <NavButtons>
            <Arrow color="#3f4246" /><Arrow flip color="#a7a9ac" /><Reload />
          </NavButtons>
          <AddressBar>
            <SiteInfo><Tune /></SiteInfo>
            <Text $ls={-0.05}>99e565d9-defe-4b43-9370-4d17ce50e7be-00-x7o9p3e30uky.picard.replit.dev</Text>
            <UrlPath $ls={-0.55}>/my-quizzes</UrlPath>
            <Star />
          </AddressBar>
          <Extensions>
            <PinkExtension>
              <svg width="13" height="19" viewBox="0 0 13 19" fill="none" stroke="#fff" strokeWidth="1.500"><path d="M8 1.500L3 5l4.500 3.500M11 3L6.500 6.300 11 9.500M2.500 9.500L7 13l-5 3.500M6 9.800L10.300 13 5 17.500" /></svg>
            </PinkExtension>
            <Puzzle />
            <Rule $h={24} $l={20} $r={20} />
            <ProfileDot $size={25}>P</ProfileDot>
          </Extensions>
          <MenuDots>
            <svg width="6" height="20" viewBox="0 0 6 20" fill="#3f4246"><circle cx="3.500" cy="3" r="2.100" /><circle cx="3.500" cy="10" r="2.100" /><circle cx="3.500" cy="17" r="2.100" /></svg>
          </MenuDots>
        </Toolbar>
      </ToolbarBack>

      <Bookmarks>
        <AppsGrid />
        <Rule $l={18} $r={20} />
        {bookmarks.map(([Icon, label, w, ls]) => (
          <Bookmark key={label} $w={w}><Icon /><Text $ls={ls}>{label}</Text></Bookmark>
        ))}
        <svg width="12" height="12" viewBox="0 0 12 12" fill="none" stroke="#3f4246" strokeWidth="1.700"><path d="M1 1.500L5.200 6 1 10.500M6.500 1.500L10.700 6l-4.200 4.500" /></svg>
        <Rule $l={22} $r={20} />
        <Bookmark $w={125}><Folder /><Text $ls={-0.2}>All Bookmarks</Text></Bookmark>
      </Bookmarks>

      <Shell>
        <Sidebar>
          <Brand>
            <BrandName $ls={-0.3}>CloudLMS+QMS</BrandName>
            <Collapse><ChevronLeft size={20} /></Collapse>
          </Brand>
          <NavItem><LayoutDashboard size={20} /><Text $ls={-0.45}>Dashboard</Text></NavItem>
          <NavItem><FileCheck size={20} /><Text $ls={-0.15}>My Quizzes</Text></NavItem>
          <NavItem $bottom><LogOut size={20} /><Text $ls={-0.05}>Logout</Text></NavItem>
        </Sidebar>
        <Main>
          <TopBar>
            <UserInfo>
              <Welcome $ls={-0.12}>Welcome</Welcome>
              <UserName $ls={0.25}>Vijay.singh</UserName>
            </UserInfo>
            <Avatar>V</Avatar>
          </TopBar>
          <Content>
            <PageTitle>My Quizzes</PageTitle>
            <SectionTitle>
              <Dot $color="#78716c" />
              <Text $ls={-1.22}>Practice Quizzes</Text>
              <SectionNote $ls={-0.88}>(Use these for practice and self-assessment)</SectionNote>
            </SectionTitle>
            <Grid>{quizzes.map((q) => <QuizCard key={q.until} {...q} />)}</Grid>
            <SectionTitle>
              <Dot $color="#2563eb" />
              <Text $ls={-1.3}>Assessment Quizzes</Text>
              <SectionNote $ls={-0.9}>(These are final assessments that count toward certification)</SectionNote>
            </SectionTitle>
            <EmptyCard>No assessment quizzes are currently available.</EmptyCard>
          </Content>
        </Main>
      </Shell>

      <Taskbar>
        <Slot><WindowsLogo /></Slot>
        <SearchPill><SearchGlass /><Text $ls={-0.4}>Search</Text><Salad /></SearchPill>
        <Slot><TaskView /></Slot>
        <Slot><TeamsChat /></Slot>
        <Slot><StickyNotes /></Slot>
        <Slot><Edge /></Slot>
        <Slot><Explorer /><Indicator /></Slot>
        <Slot><Copilot /></Slot>
        <Slot><WhatsApp /><Notify><Count>5</Count></Notify><Indicator /></Slot>
        <Slot><Remote /><Indicator /></Slot>
        <Slot><ActivePlate><Chrome /></ActivePlate><Notify><ProfileDot $size={20}>P</ProfileDot></Notify><Indicator $active /></Slot>
        <Slot><Office mark="X" plate="#107c41" colors={["#21a366", "#33c481", "#169154", "#107c41", "#185c37"]} /><Indicator /></Slot>
        <Slot><Office mark="W" plate="#185abd" colors={["#41a5ee", "#41a5ee", "#2b7cd3", "#185abd", "#103f91"]} /><Indicator /></Slot>
        <Tray>
          <svg width="14" height="9" viewBox="0 0 14 9" fill="none" stroke="#1b1c20" strokeWidth="1.600" strokeLinecap="round"><path d="M1 7.700L7 1.500l6 6.200" /></svg>
          <TrayText $align="center" $l={27} $r={22}><Text $ls={-0.6}>ENG</Text><Text>IN</Text></TrayText>
          <TrayStatus><Wifi /><Volume /><Battery /></TrayStatus>
          <TrayText $align="flex-end" $l={20} $r={11}><Text $ls={-0.3}>23:24</Text><Text $ls={0.15}>14-04-2025</Text></TrayText>
          <Bell />
        </Tray>
      </Taskbar>
    </Screen>
  );
}
